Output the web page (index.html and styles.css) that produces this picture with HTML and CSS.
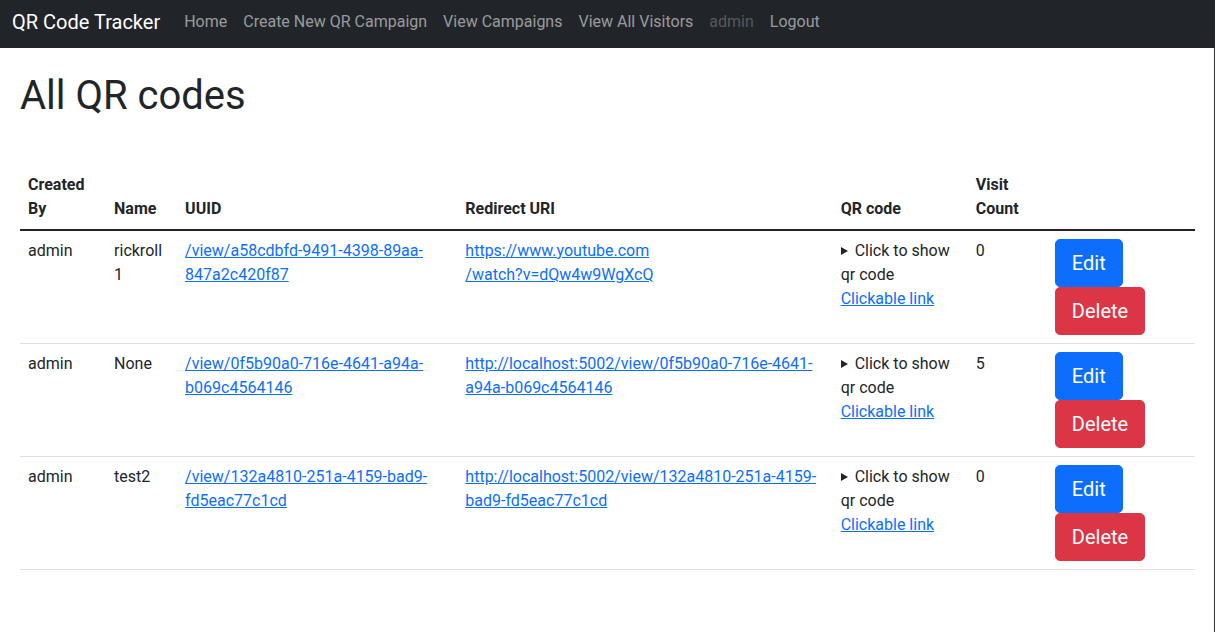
FILE: index.html
```html
<!DOCTYPE html>
<html lang="en">
<head>
<meta charset="utf-8">
<title>All QR codes</title>
<link rel="stylesheet" href="styles.css">
</head>
<body>
<nav class="navbar">
  <a class="brand" href="#">QR Code Tracker</a>
  <ul class="nav">
    <li><a class="nav-link" href="#">Home</a></li>
    <li><a class="nav-link" href="#">Create New QR Campaign</a></li>
    <li><a class="nav-link" href="#">View Campaigns</a></li>
    <li><a class="nav-link" href="#">View All Visitors</a></li>
    <li><span class="nav-link disabled">admin</span></li>
    <li><a class="nav-link" href="#">Logout</a></li>
  </ul>
</nav>
<main class="page">
  <h1 class="title">All QR codes</h1>
  <table class="table">
    <colgroup>
      <col class="c-by"><col class="c-name"><col class="c-uuid"><col class="c-uri"><col class="c-qr"><col class="c-count"><col class="c-act">
    </colgroup>
    <thead>
      <tr>
        <th>Created By</th>
        <th>Name</th>
        <th>UUID</th>
        <th>Redirect URI</th>
        <th>QR code</th>
        <th>Visit Count</th>
        <th></th>
      </tr>
    </thead>
    <tbody>
      <tr>
        <td>admin</td>
        <td>rickroll 1</td>
        <td><a href="#">/view/a58cdbfd-9491-4398-89aa-<wbr>847a2c420f87</a></td>
        <td><a href="#"><span class="nw">https://www.youtube.com</span><wbr><span class="nw">/watch?v=dQw4w9WgXcQ</span></a></td>
        <td>
          <details><summary>Click to show qr code</summary></details>
          <a class="block-link" href="#">Clickable link</a>
        </td>
        <td>0</td>
        <td>
          <form class="act"><button type="button" class="btn btn-primary">Edit</button></form>
          <form class="act"><button type="button" class="btn btn-danger">Delete</button></form>
        </td>
      </tr>
      <tr>
        <td>admin</td>
        <td>None</td>
        <td><a href="#">/view/0f5b90a0-716e-4641-a94a-<wbr>b069c4564146</a></td>
        <td><a href="#">http://localhost:5002/view/0f5b90a0-716e-4641-<wbr>a94a-b069c4564146</a></td>
        <td>
          <details><summary>Click to show qr code</summary></details>
          <a class="block-link" href="#">Clickable link</a>
        </td>
        <td>5</td>
        <td>
          <form class="act"><button type="button" class="btn btn-primary">Edit</button></form>
          <form class="act"><button type="button" class="btn btn-danger">Delete</button></form>
        </td>
      </tr>
      <tr>
        <td>admin</td>
        <td>test2</td>
        <td><a href="#">/view/132a4810-251a-4159-bad9-<wbr>fd5eac77c1cd</a></td>
        <td><a href="#">http://localhost:5002/view/132a4810-251a-4159-<wbr>bad9-fd5eac77c1cd</a></td>
        <td>
          <details><summary>Click to show qr code</summary></details>
          <a class="block-link" href="#">Clickable link</a>
        </td>
        <td>0</td>
        <td>
          <form class="act"><button type="button" class="btn btn-primary">Edit</button></form>
          <form class="act"><button type="button" class="btn btn-danger">Delete</button></form>
        </td>
      </tr>
    </tbody>
  </table>
</main>
</body>
</html>
```
FILE: styles.css
```css
* { box-sizing: border-box; }

html, body {
  margin: 0;
  padding: 0;
}

body {
  font-family: Roboto, "Noto Sans", "Liberation Sans", sans-serif;
  font-size: 16px;
  line-height: 1.5;
  color: #212529;
  background: #fff;
}

.navbar {
  display: flex;
  align-items: center;
  height: 48px;
  padding: 0 12px 4px;
  background: #212529;
}

.brand {
  font-size: 20px;
  line-height: 30px;
  color: #fff;
  text-decoration: none;
  margin-right: 16px;
  white-space: nowrap;
}

.nav {
  display: flex;
  list-style: none;
  margin: 0;
  padding: 0;
}

.nav-link {
  display: block;
  padding: 8px 8px;
  line-height: 24px;
  color: rgba(255, 255, 255, 0.55);
  text-decoration: none;
  white-space: nowrap;
}

.nav-link.disabled {
  color: rgba(255, 255, 255, 0.25);
}

.page {
  min-height: calc(100vh - 48px);
  padding: 24px 19px 16px 20px;
  border-right: 1px solid #2f3033;
}

.title {
  margin: 0 0 45px;
  font-size: 40px;
  font-weight: 400;
  line-height: 48px;
}

.table {
  width: 100%;
  table-layout: fixed;
  border-collapse: collapse;
  margin-bottom: 16px;
}

.c-by { width: 86px; }
.c-name { width: 71px; }
.c-uuid { width: 280px; }
.c-uri { width: 375px; }
.c-qr { width: 135px; }
.c-count { width: 79px; }
.c-act { width: 148px; }

.table th,
.table td {
  padding: 8px;
  text-align: left;
  border-bottom: 1px solid #dee2e6;
}

.table th {
  font-weight: 700;
  vertical-align: bottom;
  border-bottom: 2px solid #212529;
}

.table td {
  vertical-align: top;
}

.table a {
  color: #0d6efd;
  text-decoration: underline;
}

.nw {
  white-space: nowrap;
}

details {
  margin: 0;
}

summary {
  cursor: pointer;
  list-style: none;
}

summary::-webkit-details-marker {
  display: none;
}

summary::before {
  content: "";
  display: inline-block;
  width: 0;
  height: 0;
  border-left: 7px solid #212529;
  border-top: 4px solid transparent;
  border-bottom: 4px solid transparent;
  margin-right: 7px;
  vertical-align: 1px;
}

.block-link {
  display: inline-block;
}

.act {
  margin: 0;
}

.btn {
  display: inline-block;
  font-family: inherit;
  font-size: 20px;
  line-height: 30px;
  padding: 8px 16px;
  border: 1px solid transparent;
  border-radius: 5px;
  color: #fff;
  cursor: pointer;
}

.btn-primary {
  background: #0d6efd;
  border-color: #0d6efd;
}

.btn-danger {
  background: #dc3545;
  border-color: #dc3545;
}
```
